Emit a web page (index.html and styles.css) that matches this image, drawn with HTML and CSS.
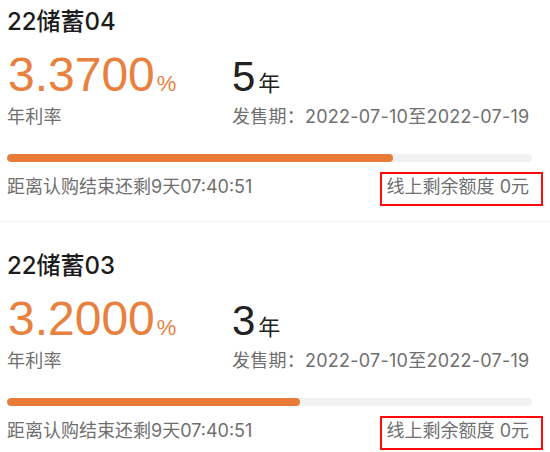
FILE: index.html
```html
<!DOCTYPE html>
<html lang="zh-CN">
<head>
    <meta charset="UTF-8">
    <meta name="viewport" content="width=device-width, initial-scale=1.0">
    <title>储蓄国债</title>
    <link rel="stylesheet" href="styles.css">
</head>
<body>
    <div class="bond-list">
        <!-- 22储蓄04 -->
        <div class="bond-card">
            <div class="bond-title">22储蓄04</div>
            <div class="bond-info">
                <div class="rate">3.3700<span class="rate-unit">%</span></div>
                <div class="term">5<span class="term-unit">年</span></div>
                <div class="info-label">年利率</div>
                <div class="info-label">发售期：2022-07-10至2022-07-19</div>
            </div>
            <div class="progress">
                <div class="progress-fill" style="width: 73.5%"></div>
            </div>
            <div class="bond-footer">
                <span class="countdown">距离认购结束还剩9天07:40:51</span>
                <span class="quota">线上剩余额度 0元</span>
            </div>
        </div>

        <!-- 22储蓄03 -->
        <div class="bond-card">
            <div class="bond-title">22储蓄03</div>
            <div class="bond-info">
                <div class="rate">3.2000<span class="rate-unit">%</span></div>
                <div class="term">3<span class="term-unit">年</span></div>
                <div class="info-label">年利率</div>
                <div class="info-label">发售期：2022-07-10至2022-07-19</div>
            </div>
            <div class="progress">
                <div class="progress-fill" style="width: 55.8%"></div>
            </div>
            <div class="bond-footer">
                <span class="countdown">距离认购结束还剩9天07:40:51</span>
                <span class="quota">线上剩余额度 0元</span>
            </div>
        </div>
    </div>
</body>
</html>
```

FILE: styles.css
```css
body {
    margin: 0;
    background-color: #ffffff;
    font-family: Inter, "Noto Sans CJK SC", sans-serif;
    color: #1f1f1f;
    overflow: hidden;
}

.bond-card {
    padding: 28px 7px 15px 7px;
    border-bottom: 1px solid #f2f2f2;
}

.bond-card:first-child {
    padding-top: 6px; /* top of the list is scrolled a little */
}

.bond-title {
    font-size: 24px;
    font-weight: 500;
    line-height: 32px;
    color: #1c1c1c;
}

.bond-info {
    display: grid;
    grid-template-columns: 225px 1fr;
    align-items: baseline;
    margin-top: 12px;
}

.rate {
    font-family: "Liberation Sans", "Noto Sans CJK SC", sans-serif;
    font-size: 48px;
    line-height: 50px;
    color: #e8803e;
    padding-left: 1px;
}

.rate-unit {
    font-size: 22px;
    line-height: 1;
    margin-left: 2px;
}

.term {
    font-family: "Liberation Sans", "Noto Sans CJK SC", sans-serif;
    font-size: 42px;
    line-height: 50px;
    color: #222;
}

.term-unit {
    font-family: "Noto Sans CJK SC", sans-serif;
    font-size: 22px;
    line-height: 1;
    margin-left: 3px;
}

.info-label {
    font-size: 18px;
    line-height: 24px;
    letter-spacing: 0.25px;
    color: #6f6f6f;
    margin-top: 3px;
}

.progress {
    height: 8px;
    margin: 25px 11px 0 0;
    background-color: #f1f1f1;
    border-radius: 4px;
    overflow: hidden;
}

.progress-fill {
    height: 100%;
    background-color: #e97b39;
    border-radius: 4px;
}

.bond-footer {
    display: flex;
    justify-content: space-between;
    align-items: baseline;
    margin-top: 10px;
    font-size: 18px;
    line-height: 24px;
    color: #6f6f6f;
}

.quota {
    border: 2px solid #ff0a0a;
    padding: 1px 12px 5px 5px;
}
```
